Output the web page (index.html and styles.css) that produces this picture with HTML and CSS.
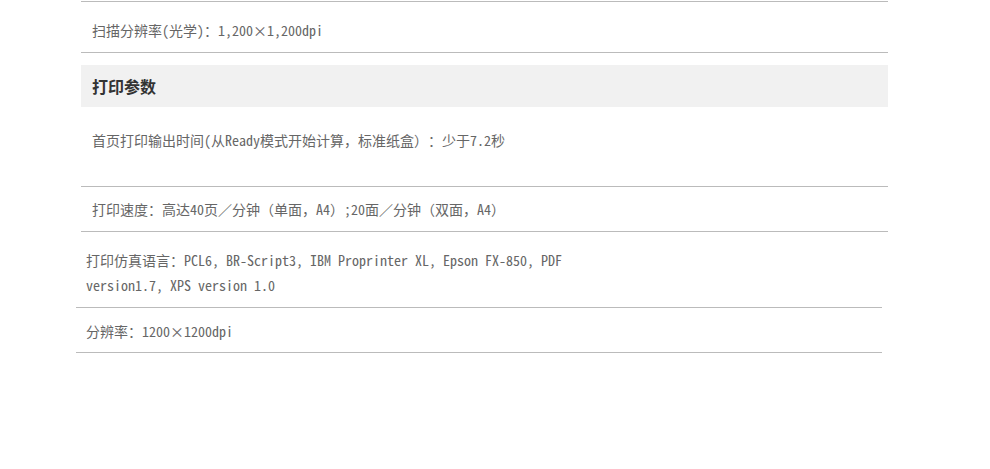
FILE: index.html
```html
<!DOCTYPE html>
<html lang="zh-CN">
<head>
<meta charset="utf-8">
<title>打印参数</title>
<link rel="stylesheet" href="styles.css">
</head>
<body>
<div class="spec spec-main">
  <div class="row row-scan">扫描分辨率(光学)：1,200×1,200dpi</div>
  <h3 class="cat">打印参数</h3>
  <div class="row row-first">首页打印输出时间(从Ready模式开始计算，标准纸盒）：少于7.2秒</div>
  <div class="row row-speed">打印速度：高达40页／分钟（单面，A4）;20面／分钟（双面，A4）</div>
</div>
<div class="spec spec-extra">
  <div class="row row-lang"><span class="wrap">打印仿真语言：PCL6, BR-Script3, IBM Proprinter XL, Epson FX-850, PDF version1.7, XPS version 1.0</span></div>
  <div class="row row-res">分辨率：1200×1200dpi</div>
</div>
</body>
</html>
```

FILE: styles.css
```css
html, body {
  margin: 0;
  padding: 0;
  background: #ffffff;
}

body {
  font-family: "Noto Sans Mono CJK SC", "Noto Sans CJK SC", "Liberation Mono", monospace;
  font-size: 14px;
  color: #666666;
}

.spec {
  display: flex;
  flex-direction: column;
}

.spec-main {
  margin-left: 81px;
  width: 807px;
  margin-top: 1px;
}

.spec-extra {
  margin-left: 76px;
  width: 806px;
}

.row {
  border-bottom: 1px solid #bbbbbb;
  line-height: 20px;
}

.spec-main .row {
  padding-left: 11px;
}

.row-scan {
  border-top: 1px solid #bbbbbb;
  padding-top: 18px;
  padding-bottom: 12px;
}

.cat {
  margin: 12px 0 0 0;
  height: 42px;
  line-height: 42px;
  background: #f1f1f1;
  padding-left: 11px;
  font-size: 16px;
  font-weight: bold;
  color: #333333;
  font-family: "Noto Sans CJK SC", sans-serif;
}

.row-first {
  padding-top: 23px;
  padding-bottom: 36px;
  text-spacing-trim: space-all;
}

.row-speed {
  padding-top: 12px;
  padding-bottom: 12px;
}

.spec-extra .row {
  padding-left: 10px;
}

.row-lang {
  line-height: 25px;
  padding-top: 16px;
  padding-bottom: 9px;
}

.wrap {
  display: block;
  max-width: 490px;
}

.row-res {
  padding-top: 13px;
  padding-bottom: 11px;
}
```
